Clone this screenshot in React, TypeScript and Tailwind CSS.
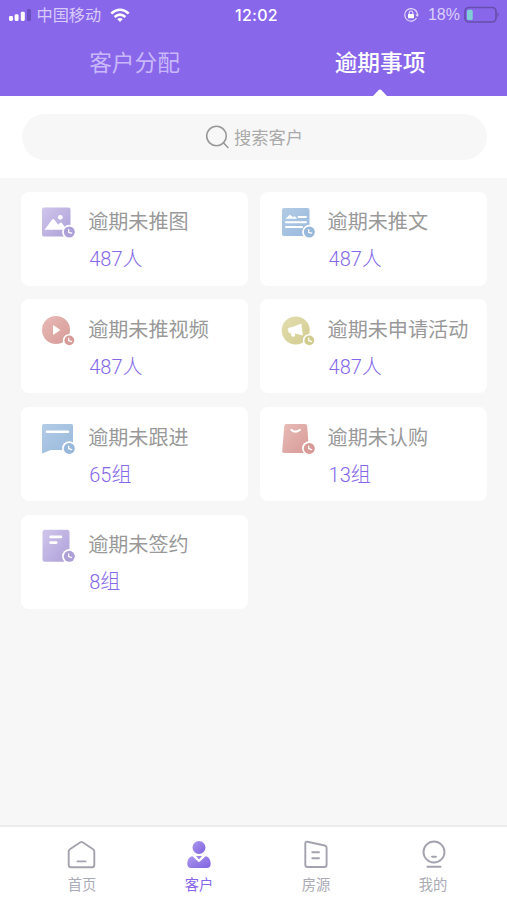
import React from "react";

type IconKind = "image" | "article" | "video" | "campaign" | "follow" | "bag" | "contract";

const palettes = {
  purple: ["#d0c6ec", "#ada0d8"],
  blue: ["#b3cce6", "#98b8dc"],
  red: ["#e8bbb7", "#d79a96"],
  yellow: ["#e3deb0", "#d2cb8f"],
} as const;

const iconColor: Record<IconKind, keyof typeof palettes> = {
  image: "purple",
  article: "blue",
  video: "red",
  campaign: "yellow",
  follow: "blue",
  bag: "red",
  contract: "purple",
};

function Glyph({ kind, fill }: { kind: IconKind; fill: string }) {
  switch (kind) {
    case "image":
      return (
        <>
          <rect x="1" y="1.5" width="28.5" height="29" rx="2" fill={fill} />
          <path d="M3.5 23.8 L11.2 13.6 Q12.2 12.5 13.2 13.6 L17.2 18.5 L19.2 16.8 Q20 16.2 20.8 17 L26 23.8Z" fill="#fff" />
          <circle cx="19.3" cy="11.3" r="2.4" fill="#fff" />
        </>
      );
    case "article":
      return (
        <>
          <rect x="1" y="2" width="27.5" height="28" rx="2" fill={fill} />
          <path d="M4.5 12.8 L8.8 8.7 L12 11 L14 10.3 L16 12.8Z" fill="#fff" />
          <path d="M17.5 10.9H25M5 16.2H25M5 21.1H21" stroke="#fff" strokeWidth="2" strokeLinecap="round" />
        </>
      );
    case "video":
      return (
        <>
          <circle cx="15" cy="16" r="14" fill={fill} />
          <path d="M12.5 11.7 L18.7 16 L12.5 20.3Z" fill="#fff" stroke="#fff" strokeWidth="1" strokeLinejoin="round" />
        </>
      );
    case "campaign":
      return (
        <>
          <circle cx="14.7" cy="16.5" r="14" fill={fill} />
          <path d="M7.2 14.3 L12 13.3 L20 10 L21.4 21 L13 18.8 L13.8 22 L11 22.3 L9.8 18.5 L8 18.5Z" fill="#fff" stroke="#fff" strokeWidth=".8" strokeLinejoin="round" />
        </>
      );
    case "follow":
      return (
        <>
          <path d="M3 2H30.5Q32 2 32 4V28H10L1 31.5V4Q1 2 3 2Z" fill={fill} />
          <path d="M6 9.8H27" stroke="#fff" strokeWidth="2.6" strokeLinecap="round" />
        </>
      );
    case "bag":
      return (
        <>
          <path d="M5.5 2H24Q26 2 26.2 4L28 29Q28 31 26 31H3Q1 31 1.2 29L3.3 4Q3.5 2 5.5 2Z" fill={fill} />
          <path d="M10.4 8Q14.5 11.4 18.8 8" fill="none" stroke="#fff" strokeWidth="2.2" strokeLinecap="round" />
        </>
      );
    case "contract":
      return (
        <>
          <rect x="1.5" y="0.8" width="27" height="32" rx="2.5" fill={fill} />
          <path d="M9.5 7.9H20M9.5 13.6H15.3" stroke="#fff" strokeWidth="2.6" strokeLinecap="round" />
        </>
      );
  }
}

function CardIcon({ kind }: { kind: IconKind }) {
  const [from, to] = palettes[iconColor[kind]];
  const fill = `url(#grad-${kind})`;
  const small = kind === "video" || kind === "campaign";
  const cy = kind === "contract" ? 27.3 : kind === "image" || kind === "article" ? 26 : 26.4;
  return (
    <svg width="36" height="36" viewBox="0 0 36 36" className="shrink-0">
      <defs>
        <linearGradient id={`grad-${kind}`} x1="0" y1="0" x2="1" y2="1">
          <stop offset="0" stopColor={from} />
          <stop offset="1" stopColor={to} />
        </linearGradient>
      </defs>
      <Glyph kind={kind} fill={fill} />
      <circle cx="28.3" cy={cy} r={small ? 6.5 : 7.2} fill="#fff" />
      <circle cx="28.3" cy={cy} r={small ? 4.9 : 5.5} fill={to} />
      <path d={`M27.7 ${cy - 2.3}V${cy + 0.3}L30.6 ${cy + 1.2}`} fill="none" stroke="#fff" strokeWidth="1.3" strokeLinecap="round" strokeLinejoin="round" />
    </svg>
  );
}

const cards: { kind: IconKind; title: string; count: string }[] = [
  { kind: "image", title: "逾期未推图", count: "487人" },
  { kind: "article", title: "逾期未推文", count: "487人" },
  { kind: "video", title: "逾期未推视频", count: "487人" },
  { kind: "campaign", title: "逾期未申请活动", count: "487人" },
  { kind: "follow", title: "逾期未跟进", count: "65组" },
  { kind: "bag", title: "逾期未认购", count: "13组" },
  { kind: "contract", title: "逾期未签约", count: "8组" },
];

function StatusBar() {
  return (
    <div className="grid h-[30px] grid-cols-3 items-center text-white">
      <div className="flex items-center pl-[9px]">
        <svg width="23" height="14" viewBox="0 0 23 14" fill="#fff">
          <rect x="0" y="8" width="4" height="5" rx="1.4" />
          <rect x="5.6" y="6.3" width="4" height="6.7" rx="1.4" />
          <rect x="11.8" y="3.7" width="4" height="9.3" rx="1.4" />
          <rect x="18" y="1" width="4" height="12" rx="1.2" fill="#6d50c4" />
        </svg>
        <span className="ml-[4.5px] text-[16.2px] leading-5 text-[#d8ccfa]">中国移动</span>
        <svg className="ml-[9px]" width="20" height="15" viewBox="0 0 20 15" fill="none" stroke="#fff" strokeWidth="2.5">
          <path d="M1.3 5.5Q10 -2 18.7 5.5M4.6 9Q10 4.3 15.4 9" />
          <path d="M10 14L7.1 11.1Q10 8.7 12.9 11.1Z" fill="#fff" stroke="none" />
        </svg>
      </div>
      <div className="pl-[6px] text-center font-[Inter,sans-serif] text-[16px] font-medium leading-5 tracking-[0.3px]">12:02</div>
      <div className="flex items-center justify-end pr-[7px]">
        <svg width="16" height="16" viewBox="0 0 16 16" fill="none" stroke="#e3daff">
          <path d="M13 4A6.3 6.3 0 1 0 13.5 11M12 2.8A6.3 6.3 0 0 1 14.2 8.6" strokeWidth="1.2" />
          <path d="M12.4 7.6H16L14.2 10Z" fill="#e3daff" stroke="none" />
          <rect x="5" y="7" width="6" height="4.3" rx=".6" fill="#fff" stroke="none" />
          <path d="M6.2 7V5.8A1.8 1.8 0 0 1 9.8 5.8V7" strokeWidth="1.1" />
        </svg>
        <span className="ml-[9px] text-[16px] leading-5 text-[#dacffb]">18%</span>
        <svg className="ml-[4px]" width="36" height="18" viewBox="0 0 36 18">
          <rect x="1" y="1.5" width="31" height="14.5" rx="4" fill="none" stroke="#6650ab" strokeWidth="1.7" />
          <rect x="3" y="3.7" width="5.7" height="10.2" rx="1.5" fill="#80cfd6" />
          <path d="M33.5 6Q36 8.7 33.5 11.5Z" fill="#6650ab" />
        </svg>
      </div>
    </div>
  );
}

const navItems = [
  {
    label: "首页",
    icon: (
      <path d="M2.9 10.2L13.4 3.2Q14.5 2.5 15.6 3.2L26.1 10.2Q27.3 11 27.3 12.4V26Q27.3 28.3 25 28.3H4Q1.7 28.3 1.7 26V12.4Q1.7 11 2.9 10.2ZM10.5 22.4H18.5" />
    ),
  },
  {
    label: "客户",
    active: true,
    icon: (
      <g stroke="none" fill="url(#nav-active)">
        <circle cx="15" cy="8.5" r="6.5" />
        <path d="M8.5 17.2C5.8 17.4 3.5 20 3.3 24.5Q3.2 29 7.5 29H22.5Q26.8 29 26.7 24.5C26.5 20 24.2 17.4 21.5 17.2L16 22.5Q15 23.4 14 22.5Z" />
        <path d="M12 17H18L15.5 19.8Q15 20.3 14.5 19.8Z" />
      </g>
    ),
  },
  {
    label: "房源",
    icon: (
      <path d="M6.4 2.7L23.8 6.5Q25.6 7 25.6 8.7V25.7Q25.6 28 23.3 28H6.6Q4.3 28 4.3 25.7V4.4Q4.3 2.3 6.4 2.7ZM11.3 13.2H18M11.3 19.3H18" />
    ),
  },
  {
    label: "我的",
    icon: (
      <>
        <circle cx="16" cy="13" r="10.5" />
        <path d="M14 17.7H18M9.4 27.8H22.6" />
      </>
    ),
  },
];

export default function App() {
  return (
    <div className="flex h-[900px] w-[507px] flex-col overflow-hidden bg-[#f7f7f7] font-['Liberation_Sans','Noto_Sans_CJK_SC',sans-serif]">
      <header className="flex h-24 shrink-0 flex-col bg-[#8967eb]">
        <StatusBar />
        <div className="grid flex-1 grid-cols-[269px_1fr] text-center text-[22.7px]">
          <div className="pt-[16px] leading-[34px] text-[#c8b8fa]">客户分配</div>
          <div className="flex flex-col items-center justify-between pr-[16px]">
            <span className="pt-[16px] leading-[34px] font-medium text-white">逾期事项</span>
            <svg width="14" height="7" viewBox="0 0 14 7" fill="#fff">
              <path d="M0 7L6 .8Q7 0 8 .8L14 7Z" />
            </svg>
          </div>
        </div>
      </header>

      <div className="h-[82px] shrink-0 bg-white pr-[20.5px] pl-[22px] pt-[18px]">
        <div className="flex h-[46px] items-center justify-center rounded-full bg-[#f7f7f7]">
          <svg width="24" height="24" viewBox="0 0 24 24" fill="none" stroke="#999" strokeWidth="1.6" strokeLinecap="round">
            <circle cx="11.5" cy="11" r="9.8" />
            <path d="M18.4 17.8L22.9 22.5" />
          </svg>
          <span className="ml-[4.5px] pt-[2px] text-[17.3px] leading-6 text-[#aaa]">搜索客户</span>
        </div>
      </div>

      <main className="grid flex-1 auto-rows-[94.2px] grid-cols-[227px_227px] gap-x-[12.4px] gap-y-[13.6px] px-[21px] pt-[13.5px]">
        {cards.map((card) => (
          <section key={card.kind} className="flex rounded-lg bg-white pt-[14.5px] pl-[20.2px]">
            <CardIcon kind={card.kind} />
            <div className="ml-[11px] whitespace-nowrap text-[20.1px]">
              <h2 className="leading-[32px] text-[#999]">{card.title}</h2>
              <p className="mt-[5px] pl-[1px] font-['Roboto','Noto_Sans_CJK_SC',sans-serif] text-[20px] leading-[32px] font-light text-[#8468e8]">{card.count}</p>
            </div>
          </section>
        ))}
      </main>

      <nav className="grid h-[75px] shrink-0 grid-cols-4 border-t-2 border-[#ececec] bg-white pr-[15.5px] pl-[23.5px] pt-[11px]">
        {navItems.map((item) => (
          <div key={item.label} className="flex flex-col items-center">
            <svg width="32" height="32" viewBox="-1 -1 32 32" fill="none" stroke="#a3a3af" strokeWidth="1.9" strokeLinecap="round" strokeLinejoin="round">
              <defs>
                <linearGradient id="nav-active" x1="0" y1="0" x2="1" y2="1">
                  <stop offset="0" stopColor="#ab97ee" />
                  <stop offset="1" stopColor="#8063df" />
                </linearGradient>
              </defs>
              {item.icon}
            </svg>
            <span className={item.active ? "mt-[5px] text-[14.3px] leading-5 text-[#8967eb]" : "mt-[5px] text-[14.3px] leading-5 text-[#ababb6]"}>
              {item.label}
            </span>
          </div>
        ))}
      </nav>
    </div>
  );
}
